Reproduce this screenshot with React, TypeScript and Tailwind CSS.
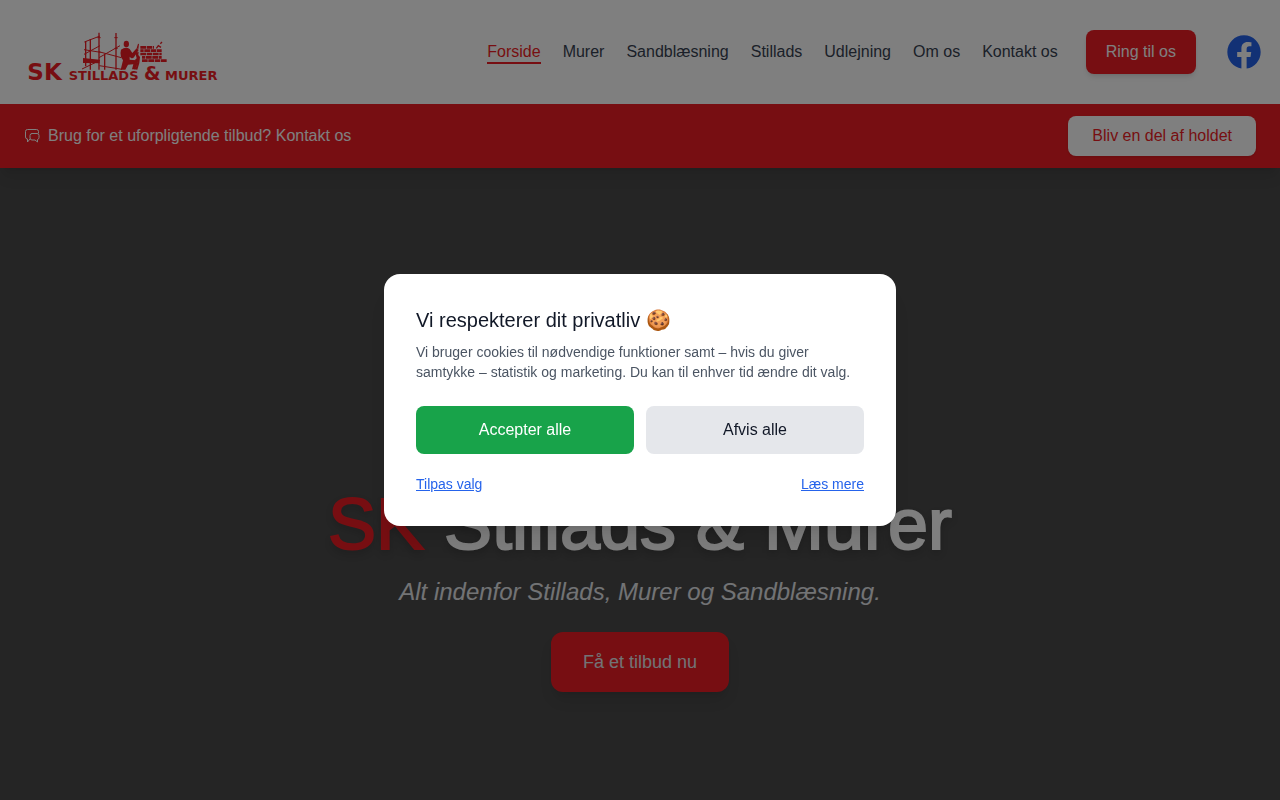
const navItems = [
  { label: "Forside", href: "#forside", active: true },
  { label: "Murer", href: "#murer" },
  { label: "Sandblæsning", href: "#sandblaesning" },
  { label: "Stillads", href: "#stillads" },
  { label: "Udlejning", href: "#udlejning" },
  { label: "Om os", href: "#om-os" },
  { label: "Kontakt os", href: "#kontakt" },
]

function Logo() {
  return (
    <svg viewBox="0 -33 615 228" className="w-[205px] h-[76px] text-[#ee1d24]" fill="currentColor" role="img" aria-label="SK Stillads & Murer">
      {/* Stillads */}
      <g stroke="currentColor" fill="none" strokeWidth="4">
        <path d="M197 48V124M211 42V134M237 23V134M288 24V134M254 86V134" />
        <path d="M193 51L240 33M192 74L242 82M192 88L240 62M236 80L304 98M237 98L300 62M186 132L240 106M238 122L306 133" strokeWidth="3" />
        <path d="M283 38h10M284 70h9M232 38h10" strokeWidth="3" />
      </g>
      <path d="M189 99l50 5v11l-50-1z" />
      {/* Murer */}
      <ellipse cx="319" cy="57" rx="8" ry="10" />
      <path d="M303 74q14-10 26-2l8 12 13-14 6 5-14 22q-5 5-10 1l-3-3v9l20 2q6 3 4 10l-8 17h-9l4-15-16 1-8 15h-14l7-28-6-10q-3-14 0-22z" />
      <path d="M346 84l10-4-1 10 5 6-2 18-6 20-10-1 1-5 5-1 4-16-8-5 6-6z" />
      <path d="M350 70l4-14 3 1-2 16z" />
      {/* Murværk */}
      <g stroke="currentColor" fill="none" strokeWidth="8">
        <path d="M361 67H402M361 87H425M366 107H440" strokeDasharray="17 2" />
        <path d="M361 77H425M366 97H425" strokeDasharray="10 2 17 2 17 2 17 2" />
        <path d="M409 70l6-8 8 5M421 56l5-5" strokeWidth="4" />
      </g>
      <g fontFamily="'DejaVu Sans', sans-serif" fontWeight="bold">
        <text x="22" y="165" fontSize="69">SK</text>
        <text x="146" y="165" fontSize="39">STILLADS</text>
        <text x="372" y="165" fontSize="57">&amp;</text>
        <text x="435" y="165" fontSize="39">MURER</text>
      </g>
    </svg>
  )
}

function FacebookIcon() {
  return (
    <svg viewBox="0 0 24 24" className="w-10 h-10" fill="currentColor" aria-hidden="true">
      <path d="M22 12.06C22 6.5 17.5 2 12 2S2 6.5 2 12.06c0 5 3.66 9.15 8.44 9.9v-7H7.9v-2.9h2.54V9.85c0-2.51 1.49-3.9 3.78-3.9 1.09 0 2.24.2 2.24.2v2.46h-1.26c-1.24 0-1.63.77-1.63 1.56v1.89h2.78l-.45 2.9h-2.33v7A10 10 0 0 0 22 12.06z" />
    </svg>
  )
}

function ChatIcon() {
  return (
    <svg viewBox="0 0 16 16" className="w-4 h-4" fill="none" stroke="currentColor" strokeLinejoin="round" strokeLinecap="round" aria-hidden="true">
      <path d="M14.500 5V3.500a2 2 0 0 0-2-2h-9a2 2 0 0 0-2 2v5.500a2 2 0 0 0 2 2v3l2.500-3" />
      <path d="M8 5.500h5a2 2 0 0 1 2 2v2a2 2 0 0 1-1.500 2v2.500l-2.500-2H8a2 2 0 0 1-2-2v-2.500a2 2 0 0 1 2-2z" />
    </svg>
  )
}

function Header() {
  return (
    <header className="shadow-lg relative">
      <div className="bg-white h-[104px] pl-5 pr-4 flex items-center justify-between">
        <a href="#forside">
          <Logo />
        </a>
        <div className="flex items-center gap-7">
          <nav className="flex items-center gap-[22px] leading-5 text-[#374151]">
            {navItems.map((item) => (
              <a
                key={item.label}
                href={item.href}
                className={item.active ? "text-[#ee1d24] border-y-2 border-t-transparent border-b-[#ee1d24]" : "border-y-2 border-transparent"}
              >
                {item.label}
              </a>
            ))}
          </nav>
          <button className="bg-[#ee1d24] text-white h-11 px-5 rounded-lg shadow-md">Ring til os</button>
          <a href="#facebook" aria-label="Facebook" className="text-[#2563eb]">
            <FacebookIcon />
          </a>
        </div>
      </div>

      <div className="bg-[#ee1d24] text-white h-16 px-6 flex items-center justify-between">
        <a href="#kontakt" className="flex items-center gap-2">
          <ChatIcon />
          <span>Brug for et uforpligtende tilbud? Kontakt os</span>
        </a>
        <button className="bg-white text-[#ee1d24] h-10 px-6 rounded-lg shadow-sm">Bliv en del af holdet</button>
      </div>
    </header>
  )
}

function Hero() {
  return (
    <main className="grow bg-[#4a4a4a] text-white flex flex-col items-center justify-end text-center pb-[108px]">
      <h1 className="text-7xl leading-none mb-4 [-webkit-text-stroke:2px] [text-shadow:0_4px_8px_rgba(0,0,0,0.2)]">
        <span className="text-[#ee1d24]">SK</span> Stillads &amp; Murer
      </h1>
      <p className="text-2xl italic text-gray-200 mb-6">Alt indenfor Stillads, Murer og Sandblæsning.</p>
      <button className="bg-[#ee1d24] text-lg text-gray-200 h-[60px] px-8 rounded-xl shadow-lg">Få et tilbud nu</button>
    </main>
  )
}

function CookieDialog() {
  return (
    <div className="fixed inset-0 bg-black/50 flex items-center justify-center p-4">
      <div role="dialog" aria-modal="true" aria-labelledby="cookie-title" className="bg-white w-full max-w-lg rounded-2xl p-8 shadow-xl">
        <h2 id="cookie-title" className="text-xl text-[#111827] mb-2">
          Vi respekterer dit privatliv 🍪
        </h2>
        <p className="text-sm text-[#4b5563] mb-6">
          Vi bruger cookies til nødvendige funktioner samt – hvis du giver samtykke – statistik og marketing. Du kan til enhver tid ændre dit valg.
        </p>
        <div className="grid grid-cols-2 gap-3">
          <button className="bg-[#18a34a] text-white h-12 rounded-lg">Accepter alle</button>
          <button className="bg-gray-200 text-[#111827] h-12 rounded-lg">Afvis alle</button>
        </div>
        <div className="flex justify-between mt-5 text-sm text-[#2563eb]">
          <button className="underline">Tilpas valg</button>
          <a href="#cookiepolitik" className="underline">
            Læs mere
          </a>
        </div>
      </div>
    </div>
  )
}

export default function App() {
  return (
    <div className="min-h-screen flex flex-col font-['Liberation_Sans',Arial,sans-serif]">
      <Header />
      <Hero />
      <CookieDialog />
    </div>
  )
}
